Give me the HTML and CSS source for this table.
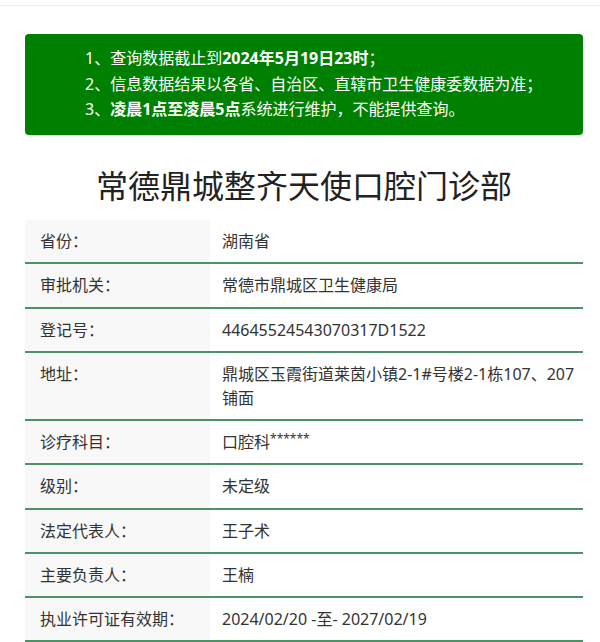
FILE: index.html
```html
<!DOCTYPE html>
<html lang="zh-CN">
<head>
<meta charset="utf-8">
<title>常德鼎城整齐天使口腔门诊部</title>
<link rel="stylesheet" href="styles.css">
</head>
<body>
<div class="topline"></div>
<main class="page">
  <div class="notice">
    <p>1、查询数据截止到<b>2024年5月19日23时</b>；</p>
    <p>2、信息数据结果以各省、自治区、直辖市卫生健康委数据为准；</p>
    <p>3、<b>凌晨1点至凌晨5点</b>系统进行维护，不能提供查询。</p>
  </div>
  <h1 class="title">常德鼎城整齐天使口腔门诊部</h1>
  <div class="info">
    <div class="row"><div class="label">省份：</div><div class="value">湖南省</div></div>
    <div class="row"><div class="label">审批机关：</div><div class="value">常德市鼎城区卫生健康局</div></div>
    <div class="row"><div class="label">登记号：</div><div class="value">44645524543070317D1522</div></div>
    <div class="row"><div class="label">地址：</div><div class="value">鼎城区玉霞街道莱茵小镇2-1#号楼2-1栋107、207铺面</div></div>
    <div class="row"><div class="label">诊疗科目：</div><div class="value">口腔科<span class="stars">******</span></div></div>
    <div class="row"><div class="label">级别：</div><div class="value">未定级</div></div>
    <div class="row"><div class="label">法定代表人：</div><div class="value">王子术</div></div>
    <div class="row"><div class="label">主要负责人：</div><div class="value">王楠</div></div>
    <div class="row"><div class="label">执业许可证有效期：</div><div class="value">2024/02/20 -至- 2027/02/19</div></div>
  </div>
</main>
</body>
</html>
```

FILE: styles.css
```css
html, body {
  margin: 0;
  padding: 0;
  background: #fff;
}
body {
  font-family: "Noto Sans", "Noto Sans CJK SC", sans-serif;
  color: #333;
}
.topline {
  height: 5px;
  border-bottom: 1px solid #ececec;
}
.page {
  padding: 28px 17px 0 25px;
}
.notice {
  background: #008000;
  border-radius: 4px;
  padding: 12px 0 12.5px 60px;
  color: #fff;
  font-size: 16px;
}
.notice p {
  margin: 0;
  line-height: 25.5px;
}
.notice b {
  font-weight: 700;
}
.title {
  margin: 27px 0 10px;
  text-align: center;
  font-size: 32px;
  line-height: 48px;
  font-weight: 400;
  color: #222;
}
.info {
  display: flex;
  flex-direction: column;
}
.row {
  display: flex;
  border-bottom: 2px solid #4b9366;
  font-size: 16px;
  line-height: 24px;
}
.label {
  width: 185px;
  flex: none;
  box-sizing: border-box;
  background: #f8f8f8;
  padding: 9px 10px 9.25px 15px;
}
.value {
  flex: 1;
  padding: 9px 6px 9.25px 12px;
}
.stars {
  font-size: 12px;
  vertical-align: top;
  line-height: 18px;
}
```
